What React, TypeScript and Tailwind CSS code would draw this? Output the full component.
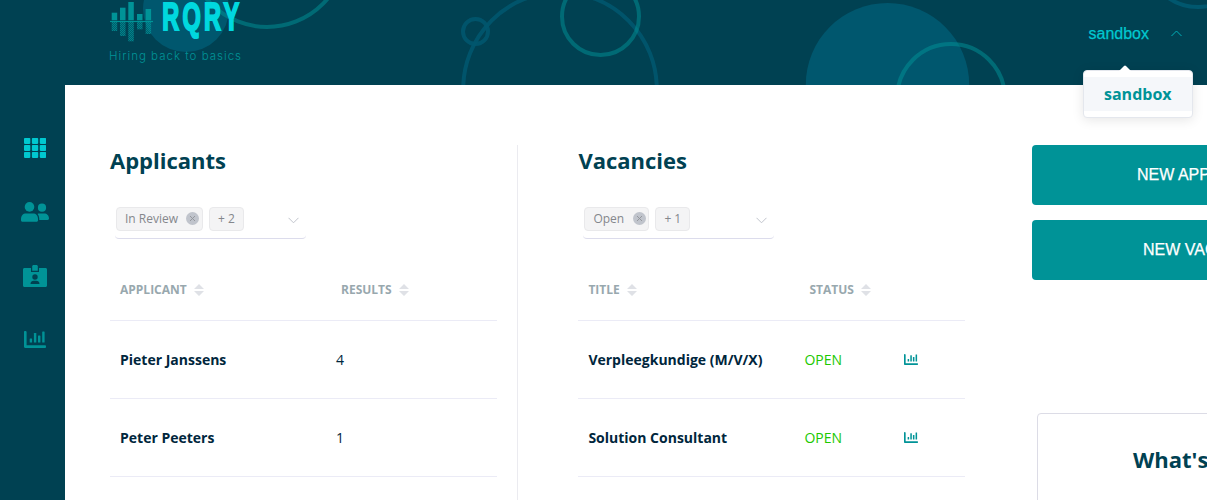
import type { ReactNode } from "react";

const barHeights = [
  { x: 111.7, top: 12.7, bottom: 31 },
  { x: 120, top: 7.7, bottom: 36 },
  { x: 128.3, top: 2, bottom: 41.3 },
  { x: 137, top: 14, bottom: 29.3 },
  { x: 145.6, top: 9, bottom: 34 },
];

function HeaderArt() {
  return (
    <svg className="absolute inset-0" width="1207" height="85" viewBox="0 0 1207 85" fill="none" aria-hidden="true">
      <circle cx="186" cy="9" r="43" fill="#00576e" />
      <g stroke="#00576e" strokeWidth="4">
        <circle cx="475.5" cy="31.5" r="12.5" strokeOpacity="0.9" />
        <circle cx="560" cy="89" r="96.8" strokeOpacity="0.9" />
        <circle cx="1198" cy="-45.5" r="52.5" />
      </g>
      <circle cx="887.5" cy="84.7" r="81.7" fill="#00576e" />
      <g stroke="#009397" strokeOpacity="0.5" strokeWidth="4">
        <circle cx="267" cy="-52" r="79" />
        <circle cx="600.5" cy="16.5" r="38.5" />
        <circle cx="951" cy="97.8" r="53.8" />
      </g>
    </svg>
  );
}

function Logo() {
  return (
    <svg className="relative" width="140" height="66" viewBox="106 0 140 66" role="img" aria-label="RQRY">
      <defs>
        <pattern id="dots" width="2" height="2" patternUnits="userSpaceOnUse">
          <rect width="1" height="1" fill="#009397" fillOpacity="0.7" />
          <rect x="1" y="1" width="1" height="1" fill="#009397" fillOpacity="0.7" />
          <rect width="2" height="2" fill="#009397" fillOpacity="0.35" />
        </pattern>
      </defs>
      {barHeights.map((b) => (
        <g key={b.x}>
          <rect x={b.x} y={b.top} width="5.5" height={20.3 - b.top} fill="#009397" />
          <rect x={b.x} y="22" width="5.5" height={b.bottom - 22} fill="url(#dots)" />
        </g>
      ))}
      <rect x="110" y="20.9" width="43" height="1.2" fill="#009397" />
      <g transform="translate(162.200 30.200) scale(0.610 1)">
        <text fontFamily="Liberation Sans" fontWeight="700" fontSize="38.500" letterSpacing="5.500" fill="#00d8df" stroke="#00d8df" strokeWidth="2.200">RQRY</text>
      </g>
      <text x="109" y="60" fontFamily="Inter" fontWeight="300" fontSize="11.5" fill="#009397" textLength="132" lengthAdjust="spacing">Hiring back to basics</text>
    </svg>
  );
}

function GridIcon() {
  return (
    <svg width="22" height="20" viewBox="0 0 22 20" fill="#00c8d0">
      {[0, 7, 14].map((y) =>
        [0, 7.9, 15.8].map((x) => <rect key={`${x}-${y}`} x={x} y={y} width="6.3" height="5.9" rx="0.8" />),
      )}
    </svg>
  );
}

function PeopleIcon() {
  return (
    <svg width="28" height="20" viewBox="0 0 28 20" fill="#009397">
      <circle cx="8.5" cy="4.9" r="4.8" />
      <circle cx="21" cy="5.7" r="4.1" />
      <path d="M0 17.4C0 13.6 2 11.6 5 11.6h7c3 0 5 2 5 5.8v.8c0 .9-.6 1.5-1.5 1.5h-14C.6 19.700 0 19.100 0 18.200z" />
      <path d="M16.600 11.900c.5-.2 1-.3 1.600-.3h4.900c2.900 0 4.900 2 4.900 5 0 .8-.5 1.400-1.400 1.400h-8.300c0-2.500-.4-4.700-1.700-6.100z" />
    </svg>
  );
}

function BadgeIcon() {
  return (
    <svg width="24" height="22" viewBox="0 0 24 22" fill="#009397">
      <path fillRule="evenodd" d="M1.500 3H8v4h8V3h6.500c.9 0 1.500.6 1.500 1.500v16c0 .9-.6 1.500-1.500 1.500h-21C.6 22 0 21.400 0 20.500v-16C0 3.600.6 3 1.500 3zM12 9.300a2.700 2.700 0 1 0 0 5.400 2.700 2.700 0 0 0 0-5.400zM7.500 19h9c0-2-1.500-3.200-3.200-3.200h-2.600C9 15.800 7.500 17 7.500 19z" />
      <path d="M9.200 1.400C9.200.6 9.900 0 10.600 0h2.800c.8 0 1.400.6 1.400 1.400v4.300H9.200z" />
    </svg>
  );
}

function ChartIcon({ className }: { className: string }) {
  return (
    <svg className={className} viewBox="0 0 22 17" fill="#009397">
      <path d="M1 0c.9 0 1.600.4 1.600 1v13.300h18.600c.5 0 .8.4.8 1v.7c0 .6-.3 1-.8 1H1.200C.5 17 0 16.500 0 15.800V1c0-.6.400-1 1-1z" />
      <rect x="5.700" y="7.600" width="2.400" height="4" rx="0.400" />
      <rect x="9.900" y="2" width="2.400" height="9.600" rx="0.400" />
      <rect x="14" y="4.600" width="2.400" height="7" rx="0.400" />
      <rect x="18.200" y="0.600" width="2.400" height="11" rx="0.400" />
    </svg>
  );
}

function Tag({ children, className, closable }: { children: ReactNode; className: string; closable?: boolean }) {
  return (
    <span className={`flex h-6 items-center rounded border border-[#e9e9eb] bg-[#f4f4f5] pl-2 text-xs text-[#84878c] ${className}`}>
      {children}
      {closable && (
        <svg className="ml-auto mr-[2.6px] -mt-px" width="13" height="13" viewBox="0 0 13 13">
          <circle cx="6.500" cy="6.500" r="6.500" fill="#c0c4cc" />
          <path d="M4 4l5 5M9 4l-5 5" stroke="#909399" strokeWidth="0.900" />
        </svg>
      )}
    </span>
  );
}

function FilterSelect({ label, more, labelClass }: { label: string; more: string; labelClass: string }) {
  return (
    <div className="ml-[5px] mt-[28px] flex h-9 w-[191px] items-center rounded border-b border-[#dcdcec] pl-px pb-[3px]">
      <Tag closable className={labelClass}>{label}</Tag>
      <Tag className="ml-1.5 w-[35px]">{more}</Tag>
      <svg className="ml-auto mr-[7px] mt-[3px]" width="11" height="7" viewBox="0 0 11 7" fill="none" stroke="#c0c4cc">
        <path d="M0.500 0.800l5 5 5-5" />
      </svg>
    </div>
  );
}

function HeadCell({ children, className }: { children: ReactNode; className: string }) {
  return (
    <div className={`flex items-center gap-[7px] text-xs font-bold text-[#98a8ae] ${className}`}>
      {children}
      <svg className="mt-px" width="10" height="12" viewBox="0 0 10 12" fill="#dfe1e6">
        <path d="M0 5l5-5 5 5zM0 7l5 5 5-5z" />
      </svg>
    </div>
  );
}

type Row = { name: string; value: string; open?: boolean };

function Panel({ title, filter, heads, rows }: { title: string; filter: ReactNode; heads: [string, string]; rows: Row[] }) {
  return (
    <section className="w-[387px] shrink-0">
      <h2 className="text-[22px] leading-[30px] font-bold text-[#004152]">{title}</h2>
      {filter}
      <div className="mt-5 flex h-[62px] border-b border-[#ebebf6]">
        <HeadCell className="w-[221px] pl-2.5">{heads[0]}</HeadCell>
        <HeadCell className="pl-2.5">{heads[1]}</HeadCell>
      </div>
      {rows.map((r) => (
        <div key={r.name} className="flex h-[78px] items-center border-b border-[#ebebf6] text-sm text-[#00263c]">
          <div className="w-[226px] pl-2.5 font-bold">{r.name}</div>
          {r.open ? <div className="w-[99.6px] text-[#20c800]">{r.value}</div> : <div>{r.value}</div>}
          {r.open && <ChartIcon className="h-[11px] w-3.5" />}
        </div>
      ))}
    </section>
  );
}

export default function App() {
  return (
    <div className="flex h-[500px] w-[1207px] overflow-hidden bg-[#004152] font-['Open_Sans',sans-serif]">
      <nav className="flex w-[65px] shrink-0 flex-col items-center pl-[5px] pt-[138px]">
        <GridIcon />
        <div className="mt-[44px]"><PeopleIcon /></div>
        <div className="mt-[43px]"><BadgeIcon /></div>
        <ChartIcon className="mt-[44px] h-[17px] w-[22px]" />
      </nav>
      <div className="min-w-0 flex-1">
        <div className="relative -ml-[65px] h-[85px]">
          <HeaderArt />
          <div className="relative flex h-full items-start justify-between pl-[106px] pr-[25px]">
            <Logo />
            <div className="relative mt-[22px] flex items-center font-['Liberation_Sans',sans-serif] text-base text-[#00c8d0]">
              <span className="[-webkit-text-stroke:0.25px]">sandbox</span>
              <svg className="ml-[22px] -mt-px" width="11" height="7" viewBox="0 0 11 7" fill="none" stroke="#00b0b8">
                <path d="M0.500 6l5-5 5 5" />
              </svg>
              <div className="absolute left-[-6px] top-[48px] z-10 w-[110px] rounded border border-[#e4e7ed] bg-white py-1.5 font-['Open_Sans',sans-serif] shadow-[0_2px_12px_rgba(0,0,0,0.1)]">
                <svg className="absolute left-[35px] top-[-6px]" width="12" height="6" viewBox="0 0 12 6" fill="white">
                  <path d="M0 6L5 1q1-1 2 0l5 5z" />
                </svg>
                <div className="h-[34px] bg-[#f5f7fa] pl-[20.5px] text-base leading-[34px] font-bold text-[#009397]">sandbox</div>
              </div>
            </div>
          </div>
        </div>
        <main className="flex h-[415px] bg-white pl-[45px] pt-[60px]">
          <Panel
            title="Applicants"
            filter={<FilterSelect label="In Review" more="+ 2" labelClass="w-[87px]" />}
            heads={["APPLICANT", "RESULTS"]}
            rows={[{ name: "Pieter Janssens", value: "4" }, { name: "Peter Peeters", value: "1" }]}
          />
          <div className="ml-5 mr-[60.4px] w-px shrink-0 bg-[#ebebf0]" />
          <Panel
            title="Vacancies"
            filter={<FilterSelect label="Open" more="+ 1" labelClass="w-[65px]" />}
            heads={["TITLE", "STATUS"]}
            rows={[
              { name: "Verpleegkundige (M/V/X)", value: "OPEN", open: true },
              { name: "Solution Consultant", value: "OPEN", open: true },
            ]}
          />
          <aside className="ml-[66.6px] w-[340px] shrink-0">
            <button className="flex h-[60px] w-full items-center rounded bg-[#009397] pl-[105px] font-['Liberation_Sans',sans-serif] text-base whitespace-nowrap text-white [-webkit-text-stroke:0.25px]">NEW APPLICANT</button>
            <button className="mt-[15px] flex h-[60px] w-full items-center rounded bg-[#009397] pl-[111px] font-['Liberation_Sans',sans-serif] text-base whitespace-nowrap text-white [-webkit-text-stroke:0.25px]">NEW VACANCY</button>
            <div className="ml-[5px] mt-[133px] h-[200px] rounded border border-[#dcdce6] pl-[95px] pt-[30px]">
              <h2 className="text-[22px] leading-[30px] font-bold text-[#004152]">What's new</h2>
            </div>
          </aside>
        </main>
      </div>
    </div>
  );
}
